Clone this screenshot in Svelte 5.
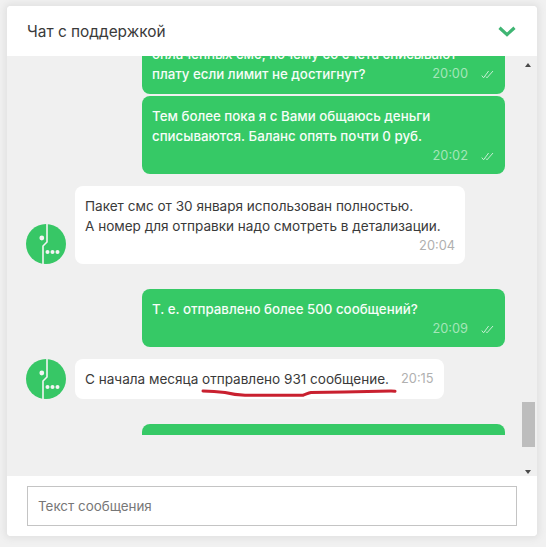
<script>
  const messages = [
    { own: true, lines: ['оплаченных смс, почему со счета списывают', 'плату если лимит не достигнут?'], time: '20:00', inline: true, gap: 'first' },
    { own: true, lines: ['Тем более пока я с Вами общаюсь деньги', 'списываются. Баланс опять почти 0 руб.'], time: '20:02', gap: 'tight' },
    { own: false, lines: ['Пакет смс от 30 января использован полностью.', 'А номер для отправки надо смотреть в детализации.'], time: '20:04', gap: 'near' },
    { own: true, lines: ['Т. е. отправлено более 500 сообщений?'], time: '20:09', gap: 'far' },
    { own: false, lines: ['С начала месяца отправлено 931 сообщение.'], time: '20:15', inline: true, mark: true, gap: 'near' },
    { own: true, lines: [], time: '', gap: 'far', stub: true }
  ];
</script>

<div class="page">
  <section class="widget">
    <header class="head">
      <h1>Чат с поддержкой</h1>
      <svg class="chevron" width="18" height="11" viewBox="0 0 18 11" aria-hidden="true">
        <path d="M1.5 1.8 9 8.6l7.5-6.8" fill="none" stroke="#3fb573" stroke-width="3.2" />
      </svg>
    </header>

    <div class="body">
      <div class="list">
        {#each messages as m}
          <div class="row gap-{m.gap}" class:own={m.own}>
            {#if !m.own}
              <svg class="avatar" width="40" height="40" viewBox="0 0 40 40" aria-hidden="true">
                <circle cx="20" cy="20" r="20" fill="#37c766" />
                <path d="M21 0v18l-4 4v18" fill="none" stroke="#f4f4f4" stroke-width="1.6" />
                <circle cx="15.8" cy="14" r="2.400" fill="#f4f4f4" />
                <circle cx="21.500" cy="28" r="2" fill="#f4f4f4" />
                <circle cx="26.500" cy="28" r="2" fill="#f4f4f4" />
                <circle cx="31.500" cy="28" r="2" fill="#f4f4f4" />
              </svg>
            {/if}
            <div class="bubble" class:inline={m.inline} class:stub={m.stub}>
              {#if !m.stub}
                <div class="text">
                  {#each m.lines as line}
                    <div>{line}</div>
                  {/each}
                </div>
                <div class="meta">
                  <span class="time">{m.time}</span>
                  {#if m.own}
                    <svg class="ticks" width="13" height="9" viewBox="0 0 13 9" aria-hidden="true">
                      <path d="M.8 5.6 2.600 7.800 7.600 1M5 6.600 6 7.800 12 1" fill="none" stroke="#c6efd3" stroke-width="1" />
                    </svg>
                  {/if}
                </div>
                {#if m.mark}
                  <svg class="scribble" width="196" height="12" viewBox="0 0 196 12" aria-hidden="true">
                    <path d="M2 6c8 .2 14 .6 22 1.500 6 1.500 12 2.500 20 2.700 20 .3 40-.2 58 0 3-.8 5-2.200 8-2.700 25-.5 60-1 80-1.500 2 0 3 0 4 .2" fill="none" stroke="#c9202f" stroke-width="3" stroke-linecap="round" />
                  </svg>
                {/if}
              {/if}
            </div>
          </div>
        {/each}
      </div>

      <div class="scrollbar" aria-hidden="true">
        <span class="arrow up"></span>
        <span class="thumb"></span>
        <span class="arrow down"></span>
      </div>
    </div>

    <footer class="foot">
      <input type="text" placeholder="Текст сообщения" />
    </footer>
  </section>
</div>

<style>
  :global(body) {
    margin: 0;
    background: #f1f1f1;
  }

  .page {
    width: 546px;
    height: 547px;
    box-sizing: border-box;
    padding: 6px 9px 11px 7px;
    font-family: Inter, "Liberation Sans", sans-serif;
  }

  .widget {
    height: 100%;
    display: flex;
    flex-direction: column;
    background: #fff;
    border-radius: 4px;
    box-shadow: 0 0 0 1px #e6e6e6, 0 0 6px 3px #e2e2e2;
    overflow: hidden;
  }

  .head {
    flex: 0 0 50px;
    display: flex;
    align-items: center;
    justify-content: space-between;
    padding: 0 21px 0 20px;
    background: #fff;
  }

  h1 {
    margin: 0;
    font-size: 15.400px;
    font-weight: 400;
    color: #3a3a3a;
  }

  .body {
    position: relative;
    flex: 1;
    background: #f0f0f0;
    overflow: hidden;
    padding-bottom: 41px;
  }

  .list {
    height: 379px;
    overflow: hidden;
    padding-right: 32px;
    padding-left: 19px;
  }

  .row {
    display: flex;
    align-items: flex-end;
    gap: 9px;
  }

  .row.own {
    justify-content: flex-end;
  }

  .gap-first {
    margin-top: -22px;
  }

  .gap-tight {
    margin-top: 2px;
  }

  .gap-near {
    margin-top: 12px;
  }

  .gap-far {
    margin-top: 25px;
  }

  .bubble {
    position: relative;
    box-sizing: border-box;
    width: 390px;
    padding: 10px 10px 8px;
    border-radius: 8px;
    background: #fff;
    color: #3a3a3a;
    font-size: 13.550px;
    line-height: 20px;
  }

  .own .bubble {
    width: 363px;
    background: #36c966;
    color: #f6fdf8;
    font-size: 13.300px;
    font-weight: 500;
  }

  .bubble.inline {
    display: flex;
    justify-content: space-between;
    align-items: flex-end;
    width: auto;
    gap: 12px;
    padding-bottom: 10px;
  }

  .own .bubble.inline {
    width: 363px;
  }

  .own .bubble.inline .text {
    flex: 1;
    min-width: 0;
    white-space: nowrap;
  }

  .bubble.stub {
    height: 60px;
  }

  .meta {
    display: flex;
    justify-content: flex-end;
    align-items: center;
    gap: 13px;
    height: 20px;
  }

  .own .meta {
    padding-right: 1px;
  }

  .time {
    font-size: 12.800px;
    font-weight: 400;
    color: #b0b0b0;
  }

  .own .time {
    color: #a4e6b9;
  }

  .scribble {
    position: absolute;
    left: 126px;
    top: 26px;
  }

  .scrollbar {
    position: absolute;
    top: 0;
    right: 2px;
    bottom: 0;
    width: 13px;
  }

  .arrow {
    position: absolute;
    left: 3px;
    width: 0;
    height: 0;
    border-left: 3.500px solid transparent;
    border-right: 3.500px solid transparent;
  }

  .arrow.up {
    top: 7px;
    border-bottom: 4px solid #4a4a4a;
  }

  .arrow.down {
    bottom: 2px;
    border-top: 4px solid #4a4a4a;
  }

  .thumb {
    position: absolute;
    top: 346px;
    left: 0;
    width: 13px;
    height: 45px;
    background: #bdbdbd;
  }

  .foot {
    flex: 0 0 60px;
    box-sizing: border-box;
    padding: 10px 20px;
    background: #fff;
  }

  input {
    display: block;
    width: 100%;
    height: 40px;
    box-sizing: border-box;
    border: 1px solid #c4c4c4;
    padding: 0 10px;
    font: 400 13.400px Inter, "Liberation Sans", sans-serif;
    background: #fff;
    outline: none;
  }

  input::placeholder {
    color: #777;
    opacity: 1;
  }
</style>
